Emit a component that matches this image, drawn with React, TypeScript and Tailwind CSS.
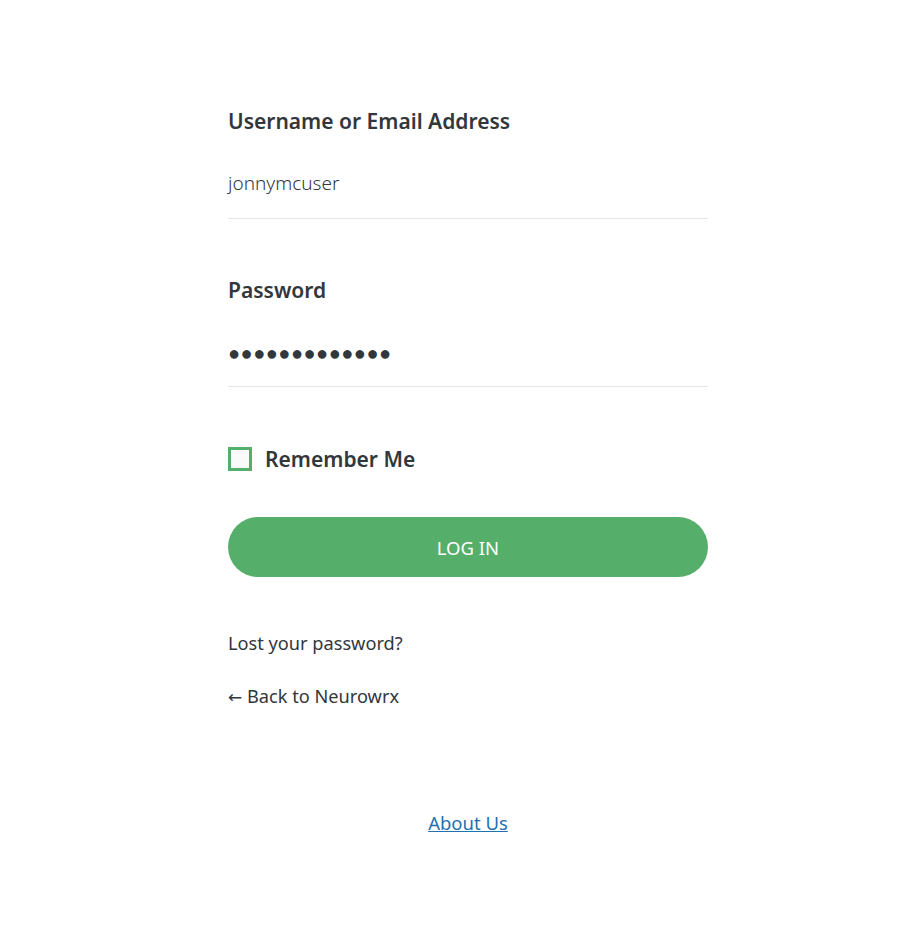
import React from "react";

export default function App() {
  return (
    <div
      className="min-h-[952px] w-full bg-white text-[#32373c]"
      style={{ fontFamily: '"Noto Sans", "Open Sans", sans-serif' }}
    >
      <div className="ml-[228px] w-[480px] pt-[106px]">
        <div className="text-[21px] leading-[30px] font-semibold">Username or Email Address</div>
        <div className="mt-[32px] border-b border-[#e5e5e5] pb-[20px] text-[19px] leading-[30px] font-light">
          jonnymcuser
        </div>
        <div className="mt-[56px] text-[21px] leading-[30px] font-semibold">Password</div>
        <div className="mt-[33px] border-b border-[#e5e5e5] pb-[18px] text-[20px] leading-[30px] tracking-[0.5px]">
          ●●●●●●●●●●●●●
        </div>
        <div className="mt-[57px] flex h-[30px] items-center gap-[13px]">
          <div className="h-[24px] w-[24px] border-[3px] border-[#55ae69] bg-[#fafafa]" />
          <span className="text-[21px] leading-[30px] font-semibold">Remember Me</span>
        </div>
        <button className="mt-[43px] flex h-[60px] w-full items-center justify-center rounded-full bg-[#55ae69] pt-[2px] text-[18.5px] text-white">
          LOG IN
        </button>
        <div className="mt-[53px] text-[18.2px] leading-[27px]">Lost your password?</div>
        <div className="mt-[26px] text-[18.2px] leading-[27px]">
          <span style={{ fontFamily: '"DejaVu Sans", sans-serif' }} className="text-[17px]">←</span> Back to Neurowrx
        </div>
        <div className="mt-[98px] text-center text-[18.5px] leading-[27px]">
          <a href="#" className="text-[#2271b1] underline">About Us</a>
        </div>
      </div>
    </div>
  );
}
